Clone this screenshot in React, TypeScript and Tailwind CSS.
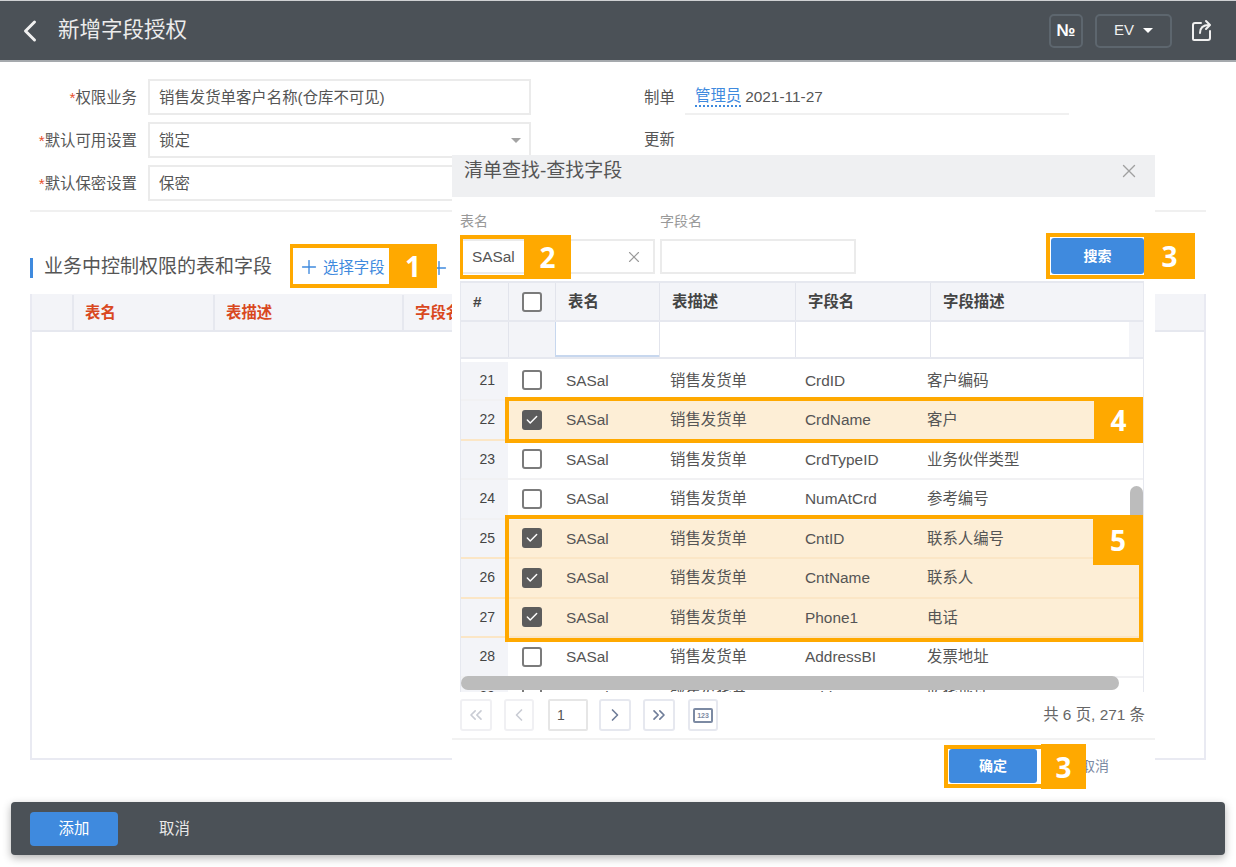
import { Check, ChevronLeft, ChevronRight, ChevronsLeft, ChevronsRight, Plus, X } from 'lucide-react'

const FONT = "font-['Liberation_Sans','Noto_Sans_CJK_SC',sans-serif]"

// 字段表 — 高亮的行带 on
const ROWS = [
  { no: 21, field: 'CrdID', desc: '客户编码' },
  { no: 22, field: 'CrdName', desc: '客户', on: true },
  { no: 23, field: 'CrdTypeID', desc: '业务伙伴类型' },
  { no: 24, field: 'NumAtCrd', desc: '参考编号' },
  { no: 25, field: 'CntID', desc: '联系人编号', on: true },
  { no: 26, field: 'CntName', desc: '联系人', on: true },
  { no: 27, field: 'Phone1', desc: '电话', on: true },
  { no: 28, field: 'AddressBI', desc: '发票地址' },
  { no: 29, field: 'AddressS', desc: '收货地址' },
]

function CheckBox({ on }: { on?: boolean }) {
  if (on) {
    return (
      <span className="flex h-[20px] w-[20px] items-center justify-center rounded-[3px] bg-[#5c5c5c]">
        <Check size={14} strokeWidth={2.5} className="text-white" />
      </span>
    )
  }
  return <span className="block h-[20px] w-[20px] rounded-[3px] border-2 border-[#7b7b7b] bg-white" />
}

function FormRow({ label, value, select }: { label: string; value: string; select?: boolean }) {
  return (
    <div className="flex h-[36px] items-center gap-[11px]">
      <div className="w-[107px] pt-[1px] text-right text-[15.4px] text-[#555]">
        <span className="text-[#e8502a]">*</span>
        {label}
      </div>
      <div className="flex h-full w-[383px] items-center justify-between border-2 border-[#ebebeb] pl-[9px] pr-[8px] pt-[1px] text-[15.4px] text-[#555]">
        <span>{value}</span>
        {select && <span className="h-0 w-0 border-x-[5px] border-t-[5px] border-x-transparent border-t-[#a3a3a3]" />}
      </div>
    </div>
  )
}

function PageBtn({ children, faded, wide }: { children: React.ReactNode; faded?: boolean; wide?: boolean }) {
  return (
    <div className={`flex h-[32px] items-center justify-center rounded-[3px] border-2 ${wide ? 'w-[32px]' : 'w-[30px]'} ${faded ? 'border-[#f0f0f3] text-[#c9ccd4]' : 'border-[#e6e8ef] text-[#6f7d99]'}`}>
      {children}
    </div>
  )
}

function FieldDialog() {
  return (
    <div className="absolute left-[452px] top-[155px] h-[635px] w-[703px] bg-white">
      <div className="flex h-[42px] items-start justify-between bg-[#eff0f2] pl-[12px] pr-[15px] pt-[2px]">
        <span className="text-[19px] text-[#555]">清单查找-查找字段</span>
        <X size={22} strokeWidth={1.5} className="mt-[3px] text-[#a0a0a0]" />
      </div>

      <div className="flex items-end justify-between pl-[8px] pr-[11px] pt-[15px]">
        <div className="flex gap-[5px]">
          <div className="w-[195px]">
            <div className="mb-[9px] text-[14px] leading-[18px] text-[#999]">表名</div>
            <div className="flex h-[35px] items-center justify-between border-2 border-[#ebebeb] pl-[10px] pr-[10px] text-[15.4px] text-[#555]">
              <span>SASal</span>
              <X size={18} strokeWidth={1.5} className="text-[#9a9a9a]" />
            </div>
          </div>
          <div className="w-[196px]">
            <div className="mb-[9px] text-[14px] leading-[18px] text-[#999]">字段名</div>
            <div className="h-[35px] border-2 border-[#ebebeb]" />
          </div>
        </div>
        <button className="flex h-[36px] w-[93px] items-center justify-center rounded-[3px] bg-[#3f8ade] text-[14px] font-bold text-white">
          搜索
        </button>
      </div>

      <div className="relative ml-[8px] mt-[7px] w-[684px] border-x border-[#e6e8ef]">
        <div className="grid h-[41px] grid-cols-[47px_47px_104px_136px_135px_1fr] border-y-2 border-[#e6e8ef] bg-[#f3f4f8] text-[15.4px] font-bold text-[#444]">
          <div className="flex items-center pl-[12px]">#</div>
          <div className="flex items-center justify-center border-l border-[#e2e4ec]"><CheckBox /></div>
          <div className="flex items-center border-l border-[#e2e4ec] pl-[12px]">表名</div>
          <div className="flex items-center border-l border-[#e2e4ec] pl-[12px]">表描述</div>
          <div className="flex items-center border-l border-[#e2e4ec] pl-[12px]">字段名</div>
          <div className="flex items-center border-l border-[#e2e4ec] pl-[12px]">字段描述</div>
        </div>
        <div className="grid h-[37px] grid-cols-[47px_47px_104px_136px_135px_1fr_14px] border-b-2 border-[#e6e8ef]">
          <div className="bg-[#f3f4f8]" />
          <div className="border-l border-[#e2e4ec] bg-[#f3f4f8]" />
          <div className="border-b-2 border-l border-[#c7d7ee]" />
          <div className="border-l border-[#e2e4ec]" />
          <div className="border-l border-[#e2e4ec]" />
          <div className="border-l border-[#e2e4ec]" />
          <div className="bg-[#f3f4f8]" />
        </div>
        <div className="mt-[2.5px] h-[330.5px] overflow-hidden">
          {ROWS.map((r) => (
            <div key={r.no} className={`grid h-[39.5px] grid-cols-[47px_47px_104px_136px_121px_1fr] border-b-2 text-[15.4px] text-[#555] ${r.on ? 'border-[#fbe6c6] bg-[#fdeed6]' : 'border-[#f1f1f3]'}`}>
              <div className="flex items-center justify-end bg-[#f3f4f8] pr-[13px] text-[14px] text-[#444]">{r.no}</div>
              <div className="flex items-center justify-center"><CheckBox on={r.on} /></div>
              <div className="flex items-center pl-[11px]">SASal</div>
              <div className="flex items-center pl-[11px]">销售发货单</div>
              <div className="flex items-center pl-[10px]">{r.field}</div>
              <div className="flex items-center pl-[11px]">{r.desc}</div>
            </div>
          ))}
        </div>
        <div className="absolute left-[0px] top-[395px] h-[14px] w-[658px] rounded-full bg-[#bcbcbc]" />
        <div className="absolute right-[0px] top-[205px] h-[40px] w-[13px] rounded-t-full bg-[#bcbcbc]" />
      </div>

      <div className="flex items-center justify-between pl-[8px] pr-[10px] pt-[7px]">
        <div className="flex items-center">
          <PageBtn faded wide><ChevronsLeft size={20} /></PageBtn>
          <div className="ml-[12px]"><PageBtn faded><ChevronLeft size={20} /></PageBtn></div>
          <div className="ml-[14px] flex h-[32px] w-[40px] items-center rounded-[2px] border-2 border-[#e6e6e6] pl-[7px] text-[14px] text-[#555]">1</div>
          <div className="ml-[11px]"><PageBtn wide><ChevronRight size={20} /></PageBtn></div>
          <div className="ml-[12px]"><PageBtn wide><ChevronsRight size={20} /></PageBtn></div>
          <div className="ml-[13px]">
            <PageBtn>
              <span className="flex h-[15px] w-[20px] items-center justify-center rounded-[2px] border-2 border-[#7c8aa3] text-[7px] font-bold leading-none text-[#7c8aa3]">123</span>
            </PageBtn>
          </div>
        </div>
        <span className="text-[15.4px] text-[#666]">共 6 页, 271 条</span>
      </div>

      <div className="mt-[7px] border-t-2 border-[#f2f2f2]" />
      <div className="flex items-center justify-end pr-[46px] pt-[9px]">
        <button className="flex h-[34px] w-[88px] items-center justify-center rounded-[3px] bg-[#3f8ade] text-[14px] font-bold text-white">
          确定
        </button>
        <span className="ml-[44px] text-[14px] text-[#7c8aa3]">取消</span>
      </div>
    </div>
  )
}

// 教程标注：橙色框和编号
function Mark({ box, num, numBox }: { box: string; num: string; numBox: string }) {
  return (
    <>
      <div className={`absolute border-[#ffa900] ${box}`} />
      <div className={`absolute flex items-center justify-center bg-[#ffa900] font-['Open_Sans',sans-serif] text-[28px] font-bold leading-none text-white ${numBox}`}>
        {num}
      </div>
    </>
  )
}

export default function App() {
  return (
    <div className={`relative h-[867px] w-[1236px] overflow-hidden bg-white ${FONT}`}>
      <header className="flex h-[62px] items-center justify-between border-b-2 border-t border-b-[#a5a9ad] border-t-[#cfd1d3] bg-[#4b5157] pl-[12px] pr-[22px]">
        <div className="flex items-center gap-[10px]">
          <ChevronLeft size={36} strokeWidth={2} className="text-[#f0f0f0]" />
          <h1 className="text-[21.5px] text-[#ececec]">新增字段授权</h1>
        </div>
        <div className="flex items-center">
          <div className="flex h-[34px] w-[34px] items-center justify-center rounded-[5px] border-2 border-[#5d666e] text-[17px] font-bold text-white">№</div>
          <div className="ml-[12px] flex h-[34px] w-[77px] items-center justify-center gap-[9px] rounded-[5px] border-2 border-[#5d666e] text-[15px] text-[#f0f0f0]">
            EV
            <span className="h-0 w-0 border-x-[5px] border-t-[5px] border-x-transparent border-t-white" />
          </div>
          <svg viewBox="0 0 24 24" className="ml-[18px] h-[24px] w-[24px] text-[#f0f0f0]" fill="none" stroke="currentColor" strokeWidth="2" strokeLinecap="round" strokeLinejoin="round">
            <path d="M11 4H5a2 2 0 0 0-2 2v14a1 1 0 0 0 1 1h14a2 2 0 0 0 2-2v-7" />
            <path d="M10 14c0-5 3-8 9-8" />
            <path d="M16 2l4 4-4 4" />
          </svg>
        </div>
      </header>

      <div className="mx-[30px] flex border-b-2 border-[#f0f0f0] pb-[9px] pt-[17px]">
        <div className="flex flex-col gap-[7px]">
          <FormRow label="权限业务" value="销售发货单客户名称(仓库不可见)" />
          <FormRow label="默认可用设置" value="锁定" select />
          <FormRow label="默认保密设置" value="保密" />
        </div>
        <div className="ml-[113px] flex flex-col text-[15.4px] text-[#555]">
          <div className="flex h-[36px] items-center">
            <span className="w-[41px] pt-[1px]">制单</span>
            <div className="flex h-full w-[384px] items-center border-b-2 border-[#f0f0f0] pl-[10px] pt-[1px]">
              <span className="border-b-2 border-dotted border-[#3f8ade] leading-[18px] text-[#3f8ade]">管理员</span>
              <span className="ml-[4px]">2021-11-27</span>
            </div>
          </div>
          <div className="mt-[7px] flex h-[36px] items-center">更新</div>
        </div>
      </div>

      <div className="ml-[30px] mt-[33px] flex h-[44px] items-center pt-[1px]">
        <span className="h-[20px] w-[3px] bg-[#3f8ade]" />
        <h2 className="ml-[11px] text-[19px] text-[#555]">业务中控制权限的表和字段</h2>
        <div className="ml-[26px] flex items-center gap-[3px] text-[15.4px] text-[#3f8ade]">
          <Plus size={22} strokeWidth={1.5} />
          选择字段
        </div>
        <Plus size={22} strokeWidth={1.5} className="ml-[43px] text-[#3f8ade]" />
      </div>

      <div className="mx-[30px] mt-[5px] h-[466px] border-2 border-[#e9eaf2] border-t-0">
        <div className="grid h-[38px] grid-cols-[40px_141px_189px_1fr] border-b-2 border-[#e6e8ef] bg-[#f3f4f8] pt-[1px] text-[15.4px] font-bold text-[#d9481f]">
          <div />
          <div className="flex items-center border-l-2 border-[#e6e8ef] pl-[11px]">表名</div>
          <div className="flex items-center border-l-2 border-[#e6e8ef] pl-[11px]">表描述</div>
          <div className="flex items-center border-l-2 border-[#e6e8ef] pl-[11px]">字段名</div>
        </div>
      </div>

      <footer className="mx-[11px] mt-[42px] flex h-[53px] items-center rounded-[4px] bg-[#4b5157] pl-[19px] shadow-[0_3px_8px_rgba(0,0,0,0.3)]">
        <button className="flex h-[34px] w-[88px] items-center justify-center rounded-[4px] bg-[#3f8ade] text-[15.4px] text-white">添加</button>
        <span className="ml-[41px] text-[15.4px] text-[#e8e8e8]">取消</span>
      </footer>

      <FieldDialog />

      <Mark box="left-[290px] top-[244px] h-[44px] w-[100px] border-y-[4px] border-l-[3px]" num="1" numBox="left-[389px] top-[244px] h-[44px] w-[48px]" />
      <Mark box="left-[460px] top-[235px] h-[44px] w-[65px] border-y-[4px] border-l-[3px]" num="2" numBox="left-[524px] top-[235px] h-[44px] w-[47px]" />
      <Mark box="left-[1046px] top-[233px] h-[46px] w-[100px] border-[4px] border-r-0" num="3" numBox="left-[1144px] top-[233px] h-[46px] w-[51px]" />
      <Mark box="left-[505px] top-[397px] h-[46px] w-[590px] border-y-[4px] border-l-[4px]" num="4" numBox="left-[1094px] top-[397px] h-[46px] w-[49px]" />
      <Mark box="left-[505px] top-[515px] h-[127px] w-[638px] border-[4px]" num="5" numBox="left-[1093px] top-[515px] h-[50px] w-[50px]" />
      <Mark box="left-[944px] top-[745px] h-[43px] w-[98px] border-[4px] border-r-0" num="3" numBox="left-[1041px] top-[744px] h-[45px] w-[45px]" />
    </div>
  )
}
